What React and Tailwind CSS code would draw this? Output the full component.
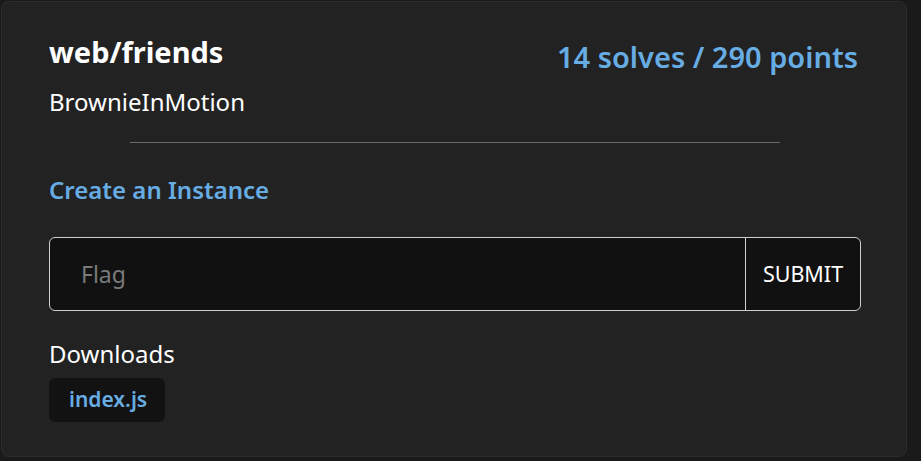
import React from "react";

const ChallengeCard = () => {
  return (
    <div className="w-[906px] h-[456px] rounded-lg border border-[#2c2c2c] bg-[#222222] pl-[47px] pr-[45px] pt-8 text-white">
      <div className="flex justify-between items-start">
        <h2 className="text-[29px] leading-[36px] font-bold">web/friends</h2>
        <span className="text-[29px] leading-[36px] font-semibold text-[#67ade3] mt-[5px] mr-[3px]">
          14 solves / 290 points
        </span>
      </div>
      <p className="mt-[11px] text-[24px] leading-[32px]">BrownieInMotion</p>
      <div className="mt-[24px] mx-auto w-[650px] h-px bg-[#6a6a6a]" />
      <a className="block mt-[31px] text-[24px] leading-[32px] font-semibold text-[#67ade3]">
        Create an Instance
      </a>
      <form className="mt-[31px] flex h-[74px] rounded-md border border-[#cfcfcf] bg-[#111111] overflow-hidden">
        <input
          type="text"
          placeholder="Flag"
          className="flex-1 bg-transparent px-[31px] text-[23px] text-white placeholder:text-[#7a7a7a] outline-none"
        />
        <button
          type="button"
          className="w-[115px] border-l border-[#cfcfcf] text-[21.5px] text-white"
        >
          SUBMIT
        </button>
      </form>
      <p className="mt-[27px] text-[24px] leading-[32px]">Downloads</p>
      <a className="mt-2 inline-flex h-[44px] items-center rounded-md bg-[#121212] pl-5 pr-[18px] text-[21px] font-semibold text-[#67ade3]">
        index.js
      </a>
    </div>
  );
};

export default function App() {
  return (
    <div
      className="w-[921px] h-[461px] bg-[#1a1a1a] pt-px pl-px overflow-hidden"
      style={{ fontFamily: '"Noto Sans", "Open Sans", sans-serif' }}
    >
      <ChallengeCard />
    </div>
  );
}
